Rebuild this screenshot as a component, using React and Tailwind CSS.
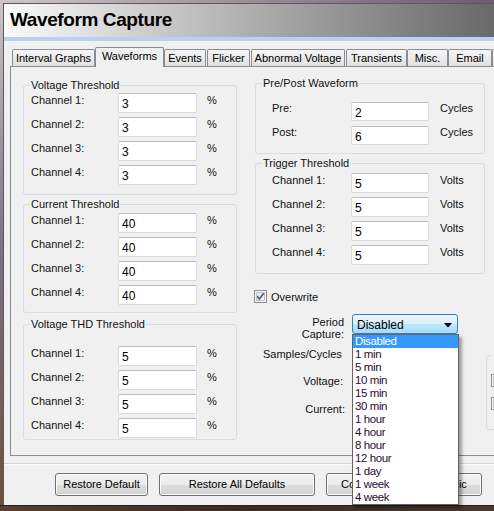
import React from "react";

function Field({ value, w = "w-[79px]", h = "h-[20px]" }) {
  return (
    <div
      className={`${w} ${h} shrink-0 bg-white border border-[#d9d9d9] border-t-[#bdbdbd] rounded-[2px] flex items-center pl-[3px] pt-[2px] text-[12px] text-black`}
    >
      {value}
    </div>
  );
}

function Row({ label, value, unit }) {
  return (
    <div className="flex items-start h-[20px]">
      <div className="w-[87px] leading-[14px]">{label}</div>
      <Field value={value} />
      <div className="ml-[10px] leading-[14px]">{unit}</div>
    </div>
  );
}

function RRow({ label, value, unit, h = "h-[20px]", lead = "leading-[14px]" }) {
  return (
    <div className={`flex items-start ${h}`}>
      <div className={`w-[79px] ${lead}`}>{label}</div>
      <Field value={value} w="w-[78px]" h={h} />
      <div className={`ml-[11px] ${lead}`}>{unit}</div>
    </div>
  );
}

function Check({ checked }) {
  return (
    <svg width="13" height="13" viewBox="0 0 13 13" className="shrink-0">
      <defs>
        <linearGradient id="cbg" x1="0" y1="0" x2="1" y2="1">
          <stop offset="0" stopColor="#dcdcdc" />
          <stop offset="1" stopColor="#fbfbfb" />
        </linearGradient>
      </defs>
      <rect x="0.5" y="0.5" width="12" height="12" fill="#f4f4f4" stroke="#8f8f8f" />
      <rect x="2.5" y="2.5" width="8" height="8" fill="url(#cbg)" stroke="#c4c4c4" />
      {checked && (
        <path d="M3.2 6.4 L5.4 9 L9.8 3.2" fill="none" stroke="#4a5f90" strokeWidth="1.7" />
      )}
    </svg>
  );
}

const tabs = [
  { t: "Interval Graphs", c: "ml-[2px] w-[83px]" },
  { t: "Waveforms", c: "w-[69px]", sel: true },
  { t: "Events", c: "w-[42px]" },
  { t: "Flicker", c: "ml-[1px] w-[43px]" },
  { t: "Abnormal Voltage", c: "ml-[1px] w-[94px]" },
  { t: "Transients", c: "ml-[1px] w-[61px]" },
  { t: "Misc.", c: "w-[41px]" },
  { t: "Email", c: "w-[44px]" },
  { t: "", c: "w-[50px]" },
];

const periods = [
  "Disabled",
  "1 min",
  "5 min",
  "10 min",
  "15 min",
  "30 min",
  "1 hour",
  "4 hour",
  "8 hour",
  "12 hour",
  "1 day",
  "1 week",
  "4 week",
];

function Btn({ children, w }) {
  return (
    <div
      className={`${w} h-[23px] shrink-0 rounded-[3px] border border-[#707070] bg-[linear-gradient(#f3f3f3,#ebebeb_50%,#dddddd_51%,#d1d1d1)] shadow-[inset_0_0_0_1px_#fcfcfc] flex items-center justify-center text-black whitespace-nowrap overflow-hidden`}
    >
      {children}
    </div>
  );
}

export default function App() {
  return (
    <div className="w-[494px] h-[511px] overflow-hidden relative flex flex-col bg-[#c9c1c1] font-['Liberation_Sans',Arial,sans-serif] text-[11px] text-[#111]">
      <div className="h-[3px] shrink-0 bg-linear-to-r from-[#cec6c6] to-[#6b5b70]" />
      <div className="flex flex-1 min-h-0">
        <div className="w-[3px] shrink-0 bg-linear-to-b from-[#cbc3c3] via-[#7a7186] to-[#6e4f3e]" />
        <div className="flex-1 flex flex-col border-l border-t border-[#5a5a5a] min-w-0">
          <div className="h-[33px] shrink-0 bg-linear-to-r from-[#fafafa] to-[#696969] flex items-center pl-[6px]">
            <span className="font-bold text-[19px] tracking-[-0.4px] text-black">Waveform Capture</span>
          </div>
          <div className="h-[4px] shrink-0 bg-[#b9d1ea]" />
          <div className="flex-1 bg-[#f0f0f0] pt-[6px] pl-[6px] flex flex-col">
            {/* Tabs */}
            <div className="flex h-[20px] -mb-[1px] relative z-10">
              {tabs.map((tb, i) =>
                tb.sel ? (
                  <div
                    key={i}
                    className={`${tb.c} h-[20px] shrink-0 bg-[#f0f0f0] border border-b-0 border-[#898c95] rounded-t-[2px] flex items-center justify-center pb-[3px] text-black`}
                  >
                    {tb.t}
                  </div>
                ) : (
                  <div
                    key={i}
                    className={`${tb.c} h-[17px] mt-[2px] shrink-0 bg-linear-to-b from-[#f5f5f5] to-[#e1e1e1] border border-b-0 border-[#898c95] rounded-t-[2px] flex items-center justify-center text-black whitespace-nowrap overflow-hidden`}
                  >
                    {tb.t}
                  </div>
                )
              )}
            </div>
            {/* Panel */}
            <div className="w-[500px] h-[390px] shrink-0 border border-[#898c95] bg-[#f0f0f0] flex items-start pl-[12px] pt-[9px]">
              {/* Left column */}
              <div className="w-[214px] shrink-0 mt-[2px] flex flex-col">
                <fieldset className="border border-[#d5dce2] rounded-[3px] pl-[7px] pb-[9px]">
                  <legend className="px-[1px] -ml-[1px] leading-[14px]">Voltage Threshold</legend>
                  <div className="flex flex-col gap-[4px] pt-[1px]">
                    <Row label="Channel 1:" value="3" unit="%" />
                    <Row label="Channel 2:" value="3" unit="%" />
                    <Row label="Channel 3:" value="3" unit="%" />
                    <Row label="Channel 4:" value="3" unit="%" />
                  </div>
                </fieldset>
                <fieldset className="mt-[2px] border border-[#d5dce2] rounded-[3px] pl-[7px] pb-[7px]">
                  <legend className="px-[1px] -ml-[1px] leading-[14px]">Current Threshold</legend>
                  <div className="flex flex-col gap-[4px] pt-[2px]">
                    <Row label="Channel 1:" value="40" unit="%" />
                    <Row label="Channel 2:" value="40" unit="%" />
                    <Row label="Channel 3:" value="40" unit="%" />
                    <Row label="Channel 4:" value="40" unit="%" />
                  </div>
                </fieldset>
                <fieldset className="mt-[4px] border border-[#d5dce2] rounded-[3px] pl-[7px] pb-[1px]">
                  <legend className="px-[1px] -ml-[1px] leading-[14px]">Voltage THD Threshold</legend>
                  <div className="flex flex-col gap-[4px] pt-[15px]">
                    <Row label="Channel 1:" value="5" unit="%" />
                    <Row label="Channel 2:" value="5" unit="%" />
                    <Row label="Channel 3:" value="5" unit="%" />
                    <Row label="Channel 4:" value="5" unit="%" />
                  </div>
                </fieldset>
              </div>
              {/* Right column */}
              <div className="ml-[18px] w-[300px] shrink-0 flex flex-col">
                <fieldset className="w-[230px] border border-[#d5dce2] rounded-[3px] pl-[6px] pb-[8px]">
                  <legend className="px-[1px] leading-[14px]">Pre/Post Waveform</legend>
                  <div className="flex flex-col gap-[5px] pt-[12px] pl-[10px]">
                    <RRow label="Pre:" value="2" unit="Cycles" h="h-[19px]" lead="leading-[13px]" />
                    <RRow label="Post:" value="6" unit="Cycles" h="h-[19px]" lead="leading-[13px]" />
                  </div>
                </fieldset>
                <fieldset className="w-[230px] mt-[2px] border border-[#d5dce2] rounded-[3px] pl-[6px] pb-[8px]">
                  <legend className="px-[1px] leading-[14px]">Trigger Threshold</legend>
                  <div className="flex flex-col gap-[4px] pt-[3px] pl-[10px]">
                    <RRow label="Channel 1:" value="5" unit="Volts" />
                    <RRow label="Channel 2:" value="5" unit="Volts" />
                    <RRow label="Channel 3:" value="5" unit="Volts" />
                    <RRow label="Channel 4:" value="5" unit="Volts" />
                  </div>
                </fieldset>
                <div className="flex items-start">
                  <div className="w-[231px] shrink-0 flex flex-col">
                    <div className="mt-[16px] -ml-[1px] flex items-center h-[13px]">
                      <Check checked />
                      <span className="ml-[4px] leading-[14px]">Overwrite</span>
                    </div>
                    <div className="mt-[11px] flex items-start">
                      <div className="w-[89px] text-right leading-[12px] pt-[2px]">
                        Period
                        <br />
                        Capture:
                      </div>
                      <div className="ml-[8px] relative w-[106px] h-[20px] z-20">
                        <div className="w-full h-full rounded-[3px] border border-[#3c7fb1] bg-[linear-gradient(#eaf6fd,#d9f0fc_50%,#bee6fd_51%,#a7d9f5)] flex items-center pl-[4px] pt-[1px] text-[12px] text-black">
                          <span className="flex-1">Disabled</span>
                          <svg width="8" height="5" viewBox="0 0 8 5" className="mr-[5px] mt-[1px]">
                            <polygon points="0,0 8,0 4,4.5" fill="#000" />
                          </svg>
                        </div>
                        <div className="absolute left-0 top-[20px] w-[107px] border border-[#646464] bg-white shadow-[3px_3px_3px_rgba(0,0,0,0.35)]">
                          {periods.map((p, i) => (
                            <div
                              key={p}
                              className={
                                i === 0
                                  ? "h-[13px] leading-[13px] pl-[2px] text-[11.5px] tracking-[-0.4px] bg-[#3399ff] text-white"
                                  : "h-[13px] leading-[13px] pl-[2px] text-[11.5px] tracking-[-0.4px] text-[#2a0c34]"
                              }
                            >
                              {p}
                            </div>
                          ))}
                        </div>
                      </div>
                    </div>
                    <div className="mt-[7px] pl-[8px] leading-[14px]">Samples/Cycles</div>
                    <div className="mt-[13px] w-[88px] text-right leading-[14px]">Voltage:</div>
                    <div className="mt-[14px] w-[90px] text-right leading-[14px]">Current:</div>
                  </div>
                  <fieldset className="mt-[74px] w-[60px] h-[82px] shrink-0 border border-[#d5dce2] rounded-[3px] pl-[4px]">
                    <legend className="px-[3px] h-[14px] w-[8px]" />
                    <div className="pt-[12px] flex flex-col gap-[10px]">
                      <Check />
                      <Check />
                    </div>
                  </fieldset>
                </div>
              </div>
            </div>
            {/* Footer */}
            <div className="mt-[7px] -ml-[6px] h-[2px] shrink-0 border-t border-[#d5d5d5] border-b border-b-[#fbfbfb]" />
            <div className="mt-[8px] pl-[45px] flex gap-[11px]">
              <Btn w="w-[93px]">Restore Default</Btn>
              <Btn w="w-[156px]">Restore All Defaults</Btn>
              <Btn w="w-[156px]">Copy Settings To Periodic</Btn>
            </div>
          </div>
        </div>
      </div>
      <div className="h-[6px] shrink-0 bg-linear-to-r from-[#5a4030] via-[#3a2a20] to-[#4a3a30] border-t border-[#2a1e18]" />
    </div>
  );
}
